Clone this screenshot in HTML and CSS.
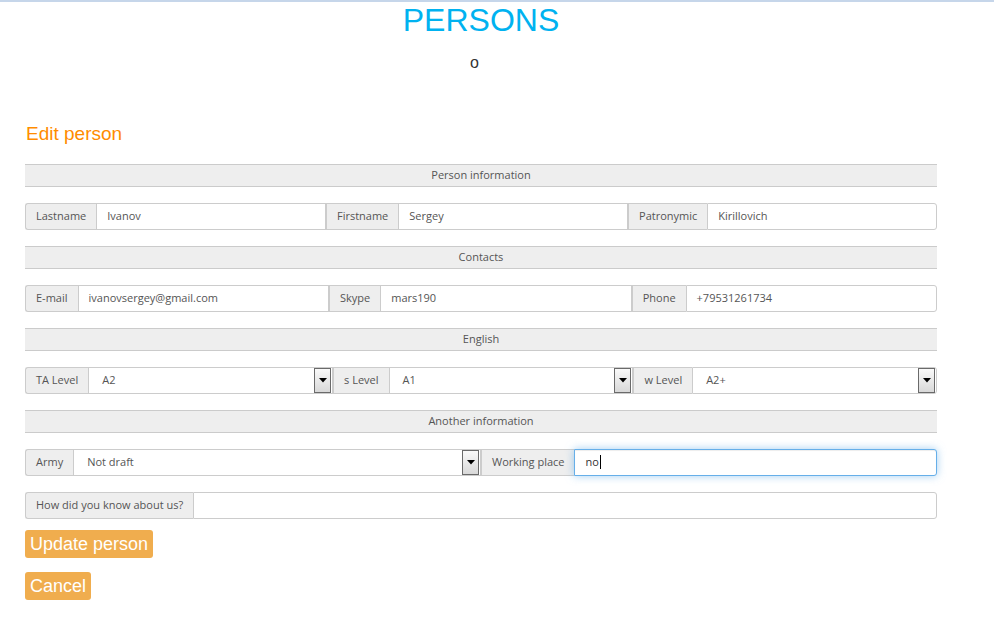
FILE: index.html
```html
<!DOCTYPE html>
<html>
<head>
<meta charset="utf-8">
<title>Persons</title>
<link rel="stylesheet" href="styles.css">
</head>
<body>
<div class="topbar"></div>
<div class="container">
  <h1 class="title">PERSONS</h1>
  <div class="loader">o</div>
  <h2 class="subtitle">Edit person</h2>

  <div class="section">Person information</div>
  <div class="row">
    <span class="label first">Lastname</span><div class="field">Ivanov</div>
    <span class="label">Firstname</span><div class="field">Sergey</div>
    <span class="label">Patronymic</span><div class="field last">Kirillovich</div>
  </div>

  <div class="section">Contacts</div>
  <div class="row">
    <span class="label first">E-mail</span><div class="field">ivanovsergey@gmail.com</div>
    <span class="label">Skype</span><div class="field">mars190</div>
    <span class="label">Phone</span><div class="field last">+79531261734</div>
  </div>

  <div class="section">English</div>
  <div class="row">
    <span class="label first">TA Level</span><div class="field select"><span class="val">A2</span><span class="arrow"><svg width="8" height="5" viewBox="0 0 8 5"><path d="M0 0h8L4 4.5z" fill="#000"/></svg></span></div>
    <span class="label">s Level</span><div class="field select"><span class="val">A1</span><span class="arrow"><svg width="8" height="5" viewBox="0 0 8 5"><path d="M0 0h8L4 4.5z" fill="#000"/></svg></span></div>
    <span class="label">w Level</span><div class="field select last"><span class="val">A2+</span><span class="arrow"><svg width="8" height="5" viewBox="0 0 8 5"><path d="M0 0h8L4 4.5z" fill="#000"/></svg></span></div>
  </div>

  <div class="section">Another information</div>
  <div class="row">
    <div class="half">
      <span class="label first">Army</span><div class="field select army"><span class="val">Not draft</span><span class="arrow"><svg width="8" height="5" viewBox="0 0 8 5"><path d="M0 0h8L4 4.5z" fill="#000"/></svg></span></div>
    </div>
    <div class="half">
      <span class="label">Working place</span><div class="field last focus">no<span class="caret"></span></div>
    </div>
  </div>

  <div class="row">
    <span class="label first">How did you know about us?</span><div class="field last"></div>
  </div>

  <div class="btn update">Update person</div>
  <div class="btn cancel">Cancel</div>
</div>
</body>
</html>
```
FILE: styles.css
```css
html, body {
  margin: 0;
  padding: 0;
  background: #fff;
}
body {
  font-family: "Liberation Sans", Arial, sans-serif;
}
.topbar {
  height: 2px;
  background: #c6d6ea;
}
.container {
  width: 912px;
  margin-left: 25px;
}
.title {
  margin: 0;
  font-family: "Liberation Sans", Arial, sans-serif;
  font-weight: normal;
  font-size: 32px;
  line-height: 37px;
  color: #00b2f0;
  text-align: center;
}
.loader {
  margin-top: 15px;
  height: 18px;
  font-family: "Liberation Sans", Arial, sans-serif;
  font-size: 16px;
  line-height: 18px;
  color: #333;
  text-align: center;
  padding-right: 13px;
}
.subtitle {
  margin: 51px 0 0 1px;
  font-weight: normal;
  font-size: 19px;
  line-height: 22px;
  color: #ff8c00;
}
.section {
  margin-top: 19px;
  height: 21px;
  border-top: 1px solid #cbcbcb;
  border-bottom: 1px solid #cbcbcb;
  background: #eeeeee;
  font-family: "Open Sans", sans-serif;
  font-size: 11px;
  line-height: 19px;
  color: #555;
  text-align: center;
}
.section + .row { margin-top: 16px; }
.row + .section { margin-top: 16px; }
.row + .row { margin-top: 16px; }
.row {
  display: flex;
  height: 27px;
  font-family: "Open Sans", sans-serif;
  font-size: 11px;
  color: #555;
}
.half {
  flex: 1 1 0;
  display: flex;
}
.label {
  flex: none;
  box-sizing: border-box;
  height: 27px;
  padding: 0 10px;
  line-height: 23px;
  background: #eeeeee;
  border: 1px solid #cccccc;
  border-right: 0;
  white-space: nowrap;
}
.label.first {
  border-radius: 3px 0 0 3px;
}
.field {
  flex: 1 1 0;
  min-width: 0;
  box-sizing: border-box;
  height: 27px;
  padding: 0 10px 2px;
  line-height: 23px;
  background: #fff;
  border: 1px solid #cccccc;
  display: flex;
  align-items: center;
  white-space: nowrap;
}
.field.last {
  border-radius: 0 3px 3px 0;
}
.field.select {
  padding: 0 1px 0 13px;
  justify-content: space-between;
}
.field.army {
  padding-left: 13px;
}
.val {
  line-height: 23px;
  padding-bottom: 2px;
}
.arrow {
  box-sizing: border-box;
  width: 17px;
  height: 25px;
  border: 1px solid #6a6a6a;
  background: linear-gradient(#fafafa, #d8d8d8);
  display: flex;
  align-items: center;
  justify-content: center;
}
.arrow svg {
  display: block;
}
.focus {
  border-color: #66afe9;
  box-shadow: inset 0 1px 1px rgba(0,0,0,.075), 0 0 8px rgba(102,175,233,.6);
  color: #333;
}
.caret {
  display: inline-block;
  width: 1px;
  height: 14px;
  background: #000;
  margin-left: 1px;
}
.btn {
  display: table;
  height: 28px;
  padding: 0 5px;
  border-radius: 3px;
  background: #f0ad4e;
  color: #fff;
  font-family: "Liberation Sans", Arial, sans-serif;
  font-size: 18px;
  line-height: 28px;
}
.update {
  margin-top: 11px;
}
.cancel {
  margin-top: 14px;
  padding: 0 5px;
}
```
